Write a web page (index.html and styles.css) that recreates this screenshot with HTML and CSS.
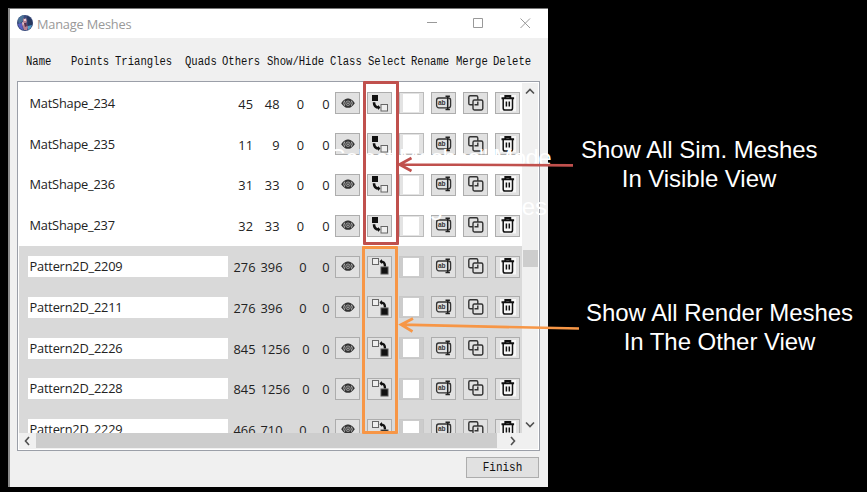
FILE: index.html
```html
<!DOCTYPE html>
<html lang="en">
<head>
<meta charset="utf-8">
<title>Manage Meshes</title>
<link rel="stylesheet" href="styles.css">
</head>
<body>
<svg class="defs" width="0" height="0">
  <symbol id="eye" viewBox="0 0 24 21">
    <path d="M5.200 10.200C7.800 6.400 10 5.600 12 5.600s4.200.8 6.800 4.600C16.200 14 14 14.800 12 14.800S7.800 14 5.200 10.200Z" fill="#333"/>
    <path d="M8.600 7.700Q6.900 10.200 8.600 12.700M15.400 7.700Q17.100 10.200 15.400 12.700" fill="none" stroke="#ccc" stroke-width=".9"/>
    <circle cx="12" cy="10.200" r="2.300" fill="#444" stroke="#bbb" stroke-width=".7"/>
    <circle cx="12" cy="10.200" r=".8" fill="#bbb"/>
  </symbol>
  <symbol id="sim" viewBox="0 0 24 21">
    <rect x="4" y="2" width="6" height="6" fill="#111"/>
    <path d="M6 9.200C6 12.500 7.500 14.500 11 14.500" fill="none" stroke="#111" stroke-width="2.600"/>
    <path d="M10 12l2.500 2.500L10 17Z" fill="#111"/>
    <rect x="13" y="11.500" width="6.500" height="6.500" fill="#eee" stroke="#666"/>
  </symbol>
  <symbol id="render" viewBox="0 0 24 21">
    <rect x="4.500" y="2.500" width="6" height="6" fill="#eee" stroke="#666"/>
    <path d="M12.500 5.500C16 5.500 17 7 17 10.500" fill="none" stroke="#111" stroke-width="2.400"/>
    <path d="M14 3l-2.500 2.500L14 8Z" fill="#111"/>
    <rect x="13" y="11" width="7" height="7" fill="#111" stroke="#555"/>
  </symbol>
  <symbol id="rename" viewBox="0 0 24 21">
    <rect x="4.600" y="5" width="14" height="9.800" rx="2.200" fill="none" stroke="#333" stroke-width="1.300"/>
    <path d="M13.500 3.300h4.400M13.500 16.600h4.400M15.700 3.300v13.300" fill="none" stroke="#222" stroke-width="1.500"/>
    <text x="6" y="12.200" class="ab">ab</text>
  </symbol>
  <symbol id="merge" viewBox="0 0 24 21">
    <path d="M9 11.800H6.200a1.400 1.400 0 0 1-1.400-1.400V4.200a1.400 1.400 0 0 1 1.400-1.400h6.200a1.400 1.400 0 0 1 1.400 1.400V7M10.400 7h7a1.400 1.400 0 0 1 1.400 1.400v7.200a1.400 1.400 0 0 1-1.400 1.400h-7A1.400 1.400 0 0 1 9 15.600V8.400A1.400 1.400 0 0 1 10.400 7ZM13.800 8.500v3.300h-3.300" fill="none" stroke="#333" stroke-width="1.400"/>
  </symbol>
  <symbol id="trash" viewBox="0 0 24 21">
    <rect x="4" y="2" width="16" height="16.500" fill="#f8f8f8"/>
    <path d="M5.500 5.200h12.600M9.300 4.500V3h5v1.500" fill="none" stroke="#111" stroke-width="1.900"/>
    <path d="M7.200 6v9.200a1.800 1.800 0 0 0 1.800 1.800h5.700a1.800 1.800 0 0 0 1.800-1.800V6M10.400 8.600v5M13.300 8.600v5" fill="none" stroke="#111" stroke-width="1.500"/>
  </symbol>
</svg>

<main class="window">
  <header class="titlebar">
    <svg class="avatar" viewBox="0 0 16 16">
      <circle cx="8" cy="8" r="8" fill="#3a4a7c"/>
      <path d="M1 4.500A8 8 0 0 1 7 0L6 6 2 9Z" fill="#4b7398"/>
      <path d="M10 1a8 8 0 0 1 5 10l-4 1Z" fill="#27375e"/>
      <path d="M1 9l4-1 1 7a8 8 0 0 1-5-6Z" fill="#5b60c4"/>
      <path d="M11 11l4-1a8 8 0 0 1-4 5Z" fill="#529fca"/>
      <path d="M6 3l1 1 2-1 1 3-1 3 2 3-1 3H7l-1-3-1-3 1-2Z" fill="#b57f91"/>
      <path d="M7 4h2v2H7ZM5 7l2 1-1 3Z" fill="#ead2d5"/>
      <path d="M7 8h2l1 3-2 1Z" fill="#572f4b"/>
    </svg>
    <h1>Manage Meshes</h1>
    <svg class="controls" viewBox="0 0 110 14" fill="none" stroke="#999">
      <path d="M1 6.500h10M47.500 2.500h9v9h-9ZM94.500 2.500l9.500 9.500M104 2.500L94.500 12"/>
    </svg>
  </header>
  <div class="columns">
    <span class="c-name">Name</span><span class="c-points">Points</span><span class="c-tri">Triangles</span><span class="c-quads">Quads</span><span class="c-others">Others</span><span class="c-show">Show/Hide</span><span class="c-class">Class</span><span class="c-select">Select</span><span class="c-rename">Rename</span><span class="c-merge">Merge</span><span class="c-delete">Delete</span>
  </div>
  <section class="list">
    <div class="rows" id="rows"></div>
    <div class="vbar">
      <svg viewBox="0 0 16 16"><path d="M4 10.500l4-4 4 4"/></svg>
      <i></i>
      <svg viewBox="0 0 16 16"><path d="M4 5.500l4 4 4-4"/></svg>
    </div>
    <div class="hbar">
      <svg viewBox="0 0 16 16"><path d="M10 4L6.500 8l3.500 4"/></svg>
      <i></i>
      <svg viewBox="0 0 16 16"><path d="M6 4l3.500 4L6 12"/></svg>
    </div>
    <div class="corner"></div>
  </section>
  <footer><button class="finish"><span>Finish</span></button></footer>
</main>

<p class="ghost ghost-mode">Select Meshes" Mode</p>
<p class="ghost ghost-manage">Manage Meshes</p>
<div class="frame frame-sim"></div>
<div class="frame frame-render"></div>
<svg class="arrows" width="867" height="492" fill="none">
  <path d="M573 165.300L400 164.500M411.500 158L399.500 164.500L411.500 171" stroke="#c0504d" stroke-width="2.700"/>
  <path d="M579 328.500L401 324.700M413 318.500L401 324.700L412.500 331.500" stroke="#f79646" stroke-width="2.700"/>
</svg>
<p class="note note-sim">Show All Sim. Meshes<br>In Visible View</p>
<p class="note note-render">Show All Render Meshes<br>In The Other View</p>
<script src="rows.js"></script>
</body>
</html>
```
FILE: styles.css
```css
* { box-sizing: border-box; }
body {
  margin: 0;
  width: 867px;
  height: 492px;
  overflow: hidden;
  position: relative;
  background: #000;
  padding: 8px 0 0 8px;
  font-family: "Open Sans", "Noto Sans", sans-serif;
}
.defs { position: absolute; }
.ab { font: bold 6.500px "Liberation Sans", sans-serif; fill: #333; }
.window {
  width: 540px;
  height: 479px;
  background: #f0f0f0;
  border-left: 2px solid #8a8a8a;
  border-top: 1px solid #777;
  display: flex;
  flex-direction: column;
}
.titlebar {
  height: 29px;
  flex: none;
  background: #fff;
  display: flex;
  align-items: center;
  padding: 0 12px 0 7px;
}
.avatar { width: 16px; height: 16px; margin-top: -1px; }
h1 {
  margin: 0 auto 0 4px;
  font-size: 12.800px;
  font-weight: 400;
  line-height: 18px;
  letter-spacing: -.2px;
  color: #999;
}
.controls { width: 110px; height: 14px; margin-top: -1px; }
.columns {
  height: 43px;
  flex: none;
  display: flex;
  padding: 16px 0 0 16px;
  font: 12.500px/16px "Liberation Mono", monospace;
  color: #111;
}
.columns span {
  flex: none;
  white-space: nowrap;
  transform: scaleX(.846);
  transform-origin: 0 0;
}
.c-name { width: 44.500px; }
.c-points { width: 44px; }
.c-tri { width: 70px; }
.c-quads { width: 37.500px; }
.c-others { width: 44.500px; }
.c-show { width: 63px; }
.c-class { width: 38px; }
.c-select { width: 43.500px; }
.c-rename { width: 44.500px; }
.c-merge { width: 37.500px; }
.c-delete { width: 38px; }
.list {
  width: 523px;
  height: 370px;
  flex: none;
  margin-left: 7px;
  padding: 1px;
  border: 1px solid #9b9fa8;
  background: #fff;
  display: grid;
  grid-template-columns: 503px 16px;
  grid-template-rows: 350px 16px;
}
.rows { overflow: hidden; }
.row {
  height: 40.800px;
  display: flex;
  align-items: center;
  font-size: 12.800px;
  color: #222;
}
.row.render { background: #d9d9d9; }
.name {
  width: 200px;
  height: 21px;
  flex: none;
  margin-left: 9px;
  padding-left: 1.500px;
  line-height: 21px;
  letter-spacing: -.2px;
  background: #fff;
}
.num { flex: none; text-align: right; padding-top: 1px; }
.buttons { display: flex; gap: 7px; margin-left: auto; padding-right: 2px; }
.tool {
  width: 25px;
  height: 22px;
  border: 1px solid #adadad;
  background: #e1e1e1;
  display: flex;
}
.tool svg { width: 24px; height: 21px; flex: none; margin: -.5px; }
.tool.check {
  border: solid #e3e3e3;
  border-width: 2px 5px 2px 4px;
  background: #fff;
  outline: 1px solid #bbb;
  outline-offset: -1px;
}
.render .check { border-color: #ccc; outline-color: #c8c8c8; }
.vbar { background: #f0f0f0; display: flex; flex-direction: column; align-items: center; }
.vbar i { width: 15px; height: 17px; margin: 151px 0 auto; background: #cdcdcd; }
.vbar svg, .hbar svg { width: 16px; height: 16px; flex: none; fill: none; stroke: #505050; stroke-width: 1.600; }
.hbar, .corner { background: #f0f0f0; }
.hbar { display: flex; }
.hbar i { width: 461px; height: 15px; margin-left: 1px; background: #cdcdcd; }
.hbar svg:last-child { margin-left: 8px; }
footer { display: flex; justify-content: flex-end; padding: 6px 9px 0 0; }
.finish {
  width: 73px;
  height: 21px;
  padding: 1px 0 0;
  border: 1px solid #adadad;
  background: #e1e1e1;
  color: #111;
  font: 12.500px/18px "Liberation Mono", monospace;
}
.finish span { display: inline-block; transform: scaleX(.88); }
.ghost, .note { position: absolute; margin: 0; color: #fff; font-family: "Liberation Sans", sans-serif; white-space: nowrap; }
.ghost { font-size: 24px; line-height: 28px; }
.ghost-mode { right: 316px; top: 144px; letter-spacing: -.6px; }
.ghost-manage { right: 320px; top: 193px; }
.frame { position: absolute; border: 3px solid #c0504d; border-radius: 1px; }
.frame-sim { left: 363px; top: 81px; width: 36px; height: 164px; }
.frame-render { left: 362px; top: 246px; width: 36px; height: 188px; border-color: #f79646; }
.arrows { position: absolute; left: 0; top: 0; }
.note { font-size: 24px; line-height: 29px; letter-spacing: -.05px; text-align: center; }
.note-sim { left: 581px; top: 135px; width: 236px; }
.note-render { left: 586px; top: 298px; width: 267px; }
```
FILE: rows.js
```js
const meshes = [
  ["MatShape_234", [45, 48, 0, 0]],
  ["MatShape_235", [11, 9, 0, 0]],
  ["MatShape_236", [31, 33, 0, 0]],
  ["MatShape_237", [32, 33, 0, 0]],
  ["Pattern2D_2209", [276, 396, 0, 0]],
  ["Pattern2D_2211", [276, 396, 0, 0]],
  ["Pattern2D_2226", [845, 1256, 0, 0]],
  ["Pattern2D_2228", [845, 1256, 0, 0]],
  ["Pattern2D_2229", [466, 710, 0, 0]]
];

function widths(counts) {
  if (counts[1] > 999) return [27.5, 34.5, 19.5, 20];
  if (counts[1] > 99) return [27.5, 27, 24, 23];
  return [25, 26.5, 24.5, 25.5];
}

const icon = id => `<span class="tool"><svg><use href="#${id}"/></svg></span>`;

document.getElementById("rows").innerHTML = meshes.map(([name, counts]) => {
  const kind = name.startsWith("Pattern") ? "render" : "sim";
  const w = widths(counts);
  const nums = counts.map((n, i) => `<span class="num" style="width:${w[i]}px">${n}</span>`).join("");
  return `<div class="row ${kind}"><span class="name">${name}</span>${nums}<span class="buttons">` +
    icon("eye") + icon(kind) + `<span class="tool check"></span>` +
    icon("rename") + icon("merge") + icon("trash") + `</span></div>`;
}).join("");
```
